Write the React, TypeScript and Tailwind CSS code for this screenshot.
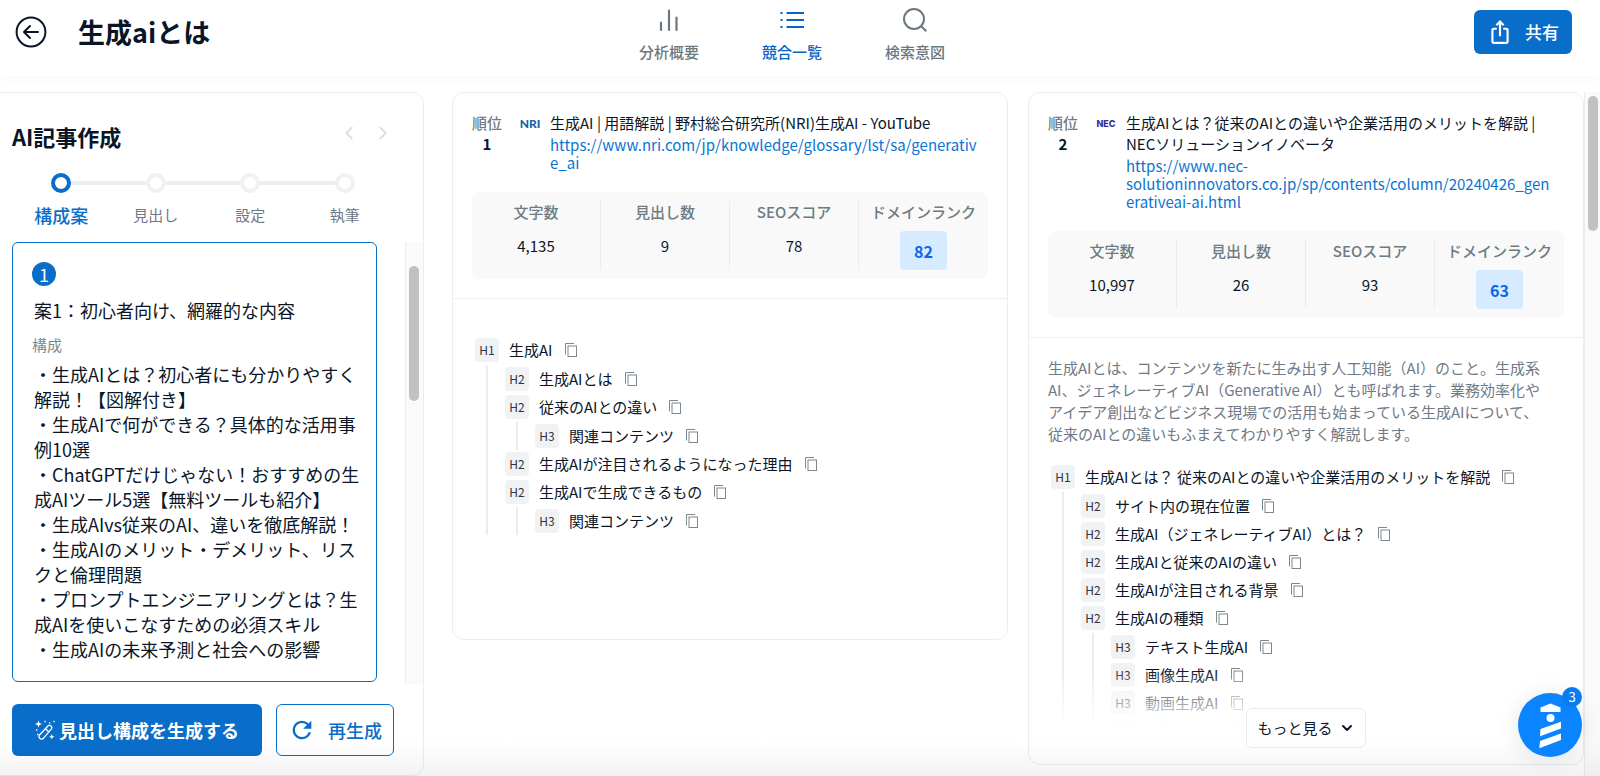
import { MdIosShare, MdRefresh } from "react-icons/md";
import { ChevronDown, ChevronLeft, ChevronRight } from "lucide-react";
import type { ReactNode } from "react";

type Heading = {
  level: string;
  text: string;
  children?: Heading[];
};

type Competitor = {
  rank: number;
  logo: ReactNode;
  title: string;
  url: string;
  stats: { label: string; value: string }[];
  domainRank: string;
  description?: string;
  headings: Heading[];
  collapsed?: boolean;
};

const steps = ["構成案", "見出し", "設定", "執筆"];

const outline = [
  "・生成AIとは？初心者にも分かりやすく解説！【図解付き】",
  "・生成AIで何ができる？具体的な活用事例10選",
  "・ChatGPTだけじゃない！おすすめの生成AIツール5選【無料ツールも紹介】",
  "・生成AIvs従来のAI、違いを徹底解説！",
  "・生成AIのメリット・デメリット、リスクと倫理問題",
  "・プロンプトエンジニアリングとは？生成AIを使いこなすための必須スキル",
  "・生成AIの未来予測と社会への影響",
];

const competitors: Competitor[] = [
  {
    rank: 1,
    logo: <span className="font-['Lato'] text-[12px] font-black text-[#1c5fa8]">NRI</span>,
    title: "生成AI | 用語解説 | 野村総合研究所(NRI)生成AI - YouTube",
    url: "https://www.nri.com/jp/knowledge/glossary/lst/sa/generative_ai",
    stats: [
      { label: "文字数", value: "4,135" },
      { label: "見出し数", value: "9" },
      { label: "SEOスコア", value: "78" },
    ],
    domainRank: "82",
    headings: [
      {
        level: "H1",
        text: "生成AI",
        children: [
          { level: "H2", text: "生成AIとは" },
          { level: "H2", text: "従来のAIとの違い", children: [{ level: "H3", text: "関連コンテンツ" }] },
          { level: "H2", text: "生成AIが注目されるようになった理由" },
          { level: "H2", text: "生成AIで生成できるもの", children: [{ level: "H3", text: "関連コンテンツ" }] },
        ],
      },
    ],
  },
  {
    rank: 2,
    logo: <span className="font-['Inter'] text-[9px] font-extrabold text-[#3a2f95]">NEC</span>,
    title: "生成AIとは？従来のAIとの違いや企業活用のメリットを解説 | NECソリューションイノベータ",
    url: "https://www.nec-solutioninnovators.co.jp/sp/contents/column/20240426_generativeai-ai.html",
    stats: [
      { label: "文字数", value: "10,997" },
      { label: "見出し数", value: "26" },
      { label: "SEOスコア", value: "93" },
    ],
    domainRank: "63",
    description:
      "生成AIとは、コンテンツを新たに生み出す人工知能（AI）のこと。生成系AI、ジェネレーティブAI（Generative AI）とも呼ばれます。業務効率化やアイデア創出などビジネス現場での活用も始まっている生成AIについて、従来のAIとの違いもふまえてわかりやすく解説します。",
    collapsed: true,
    headings: [
      {
        level: "H1",
        text: "生成AIとは？ 従来のAIとの違いや企業活用のメリットを解説",
        children: [
          { level: "H2", text: "サイト内の現在位置" },
          { level: "H2", text: "生成AI（ジェネレーティブAI）とは？" },
          { level: "H2", text: "生成AIと従来のAIの違い" },
          { level: "H2", text: "生成AIが注目される背景" },
          {
            level: "H2",
            text: "生成AIの種類",
            children: [
              { level: "H3", text: "テキスト生成AI" },
              { level: "H3", text: "画像生成AI" },
              { level: "H3", text: "動画生成AI" },
              { level: "H3", text: "音声生成AI" },
            ],
          },
        ],
      },
    ],
  },
];

const BackIcon = () => (
  <svg viewBox="0 0 32 32" className="h-8 w-8" fill="none" stroke="currentColor" strokeWidth="2">
    <circle cx="16" cy="16" r="14.4" />
    <path d="M23 16H9.5M15 10l-6 6 6 6" strokeLinecap="round" strokeLinejoin="round" />
  </svg>
);

const BarsIcon = () => (
  <svg viewBox="0 0 24 24" className="h-6 w-6" fill="none" stroke="currentColor" strokeWidth="2.2" strokeLinecap="round">
    <path d="M4 14.500v7.500M12 2.500v19.500M19.500 9.500v12.500" />
  </svg>
);

const ListIcon = () => (
  <svg viewBox="0 0 24 24" className="h-6 w-6" fill="none" stroke="currentColor" strokeWidth="2">
    <path d="M6.500 5H24M6.500 12H24M6.500 19H24M.5 5h2M.5 12h2M.5 19h2" />
  </svg>
);

const SearchIcon = () => (
  <svg viewBox="0 0 24 24" className="h-6 w-6" fill="none" stroke="currentColor" strokeWidth="2">
    <circle cx="11" cy="11" r="10" />
    <path d="M18 18l5.300 5.300" />
  </svg>
);

const CopyIcon = () => (
  <svg viewBox="0 0 12 14" className="h-[14px] w-3" fill="none" stroke="currentColor" strokeWidth="1">
    <path d="M.5 11.500V.5h8.500" />
    <rect x="3" y="3" width="8.500" height="10.500" />
  </svg>
);

const WandIcon = () => (
  <svg viewBox="0 0 20 20" className="h-5 w-5" fill="none" stroke="currentColor" strokeWidth="1.300">
    <path d="M4.300 15.200L12.700 6.200a2.300 2.300 0 0 1 3.500 3L8.300 18.400a2.600 2.600 0 0 1-4-3.200z" />
    <path d="M10.500 8.800l3.200 2.900" />
    <path
      d="M3.500 .5l1 2.500L7 4 4.500 5l-1 2.500L2.500 5 0 4l2.500-1zM16.800 14l.8 2 2 .8-2 .8-.8 2-.8-2-2-.8 2-.8z"
      fill="currentColor"
      stroke="none"
    />
    <path d="M9.300 1.500h1.400M14 2.800h1.400M18.300 1.500h1.400M1 10h1.400M2 14.500h1.400" />
  </svg>
);

const LighthouseIcon = () => (
  <svg viewBox="0 0 64 64" className="h-16 w-16" fill="#fff">
    <path d="M22.500 14.500L32.500 10.500l10 4V19h-20z" />
    <circle cx="32.500" cy="25" r="4" />
    <path d="M22.500 36L43 28.800v6.700L22 43.300zM22 48l21-7.500v6.500L21.300 55.200z" />
  </svg>
);

const navItems = [
  { label: "分析概要", icon: <BarsIcon /> },
  { label: "競合一覧", icon: <ListIcon />, active: true },
  { label: "検索意図", icon: <SearchIcon /> },
];

const Header = () => {
  return (
    <header className="grid h-[76px] shrink-0 grid-cols-[1fr_auto_1fr] items-start bg-white pt-2 pr-7 pl-3 shadow-[0_1px_16px_rgba(0,0,0,0.04)]">
      <div className="flex h-12 items-center gap-[31px]">
        <button aria-label="戻る" className="pl-[3px]">
          <BackIcon />
        </button>
        <h1 className="text-[27px] leading-8 font-bold">生成aiとは</h1>
      </div>
      <nav className="flex">
        {navItems.map((item) => (
          <a
            key={item.label}
            href="#"
            className={`flex w-[123px] flex-col items-center gap-2 text-[15px] leading-6 font-medium ${
              item.active ? "text-[#0763c9]" : "text-[#6c7880]"
            }`}
          >
            {item.icon}
            {item.label}
          </a>
        ))}
      </nav>
      <div className="flex h-12 items-center justify-end">
        <button className="flex h-11 items-center gap-3 rounded-md bg-[#096dca] px-[13px] text-[17px] font-medium text-white">
          <MdIosShare className="h-[26px] w-[26px]" />
          共有
        </button>
      </div>
    </header>
  );
};

const ArticlePanel = () => {
  return (
    <aside className="flex w-[424px] shrink-0 flex-col rounded-r-xl border border-l-0 border-[#eaeef0] bg-white">
      <div className="flex items-start justify-between pt-[27px] pr-[29px] pl-3">
        <h2 className="text-[22px] leading-8 font-bold">AI記事作成</h2>
        <div className="mt-0.5 flex gap-3 text-[#dcdfe2]">
          <button aria-label="前へ">
            <ChevronLeft className="h-[22px] w-[22px]" />
          </button>
          <button aria-label="次へ">
            <ChevronRight className="h-[22px] w-[22px]" />
          </button>
        </div>
      </div>

      <ol className="mt-[21px] grid grid-cols-4 pr-[31px] pl-[14px]">
        {steps.map((step, index) => (
          <li key={step} className="flex flex-col items-center gap-2.5">
            <div className="flex w-full items-center">
              <span className={`h-1 flex-1 ${index > 0 ? "bg-[#ebeef2]" : ""}`} />
              <span
                className={`h-5 w-5 rounded-full border-4 ${index === 0 ? "border-[#096dca]" : "border-[#f0f1f3]"}`}
              />
              <span className={`h-1 flex-1 ${index < steps.length - 1 ? "bg-[#ebeef2]" : ""}`} />
            </div>
            <span
              className={
                index === 0
                  ? "text-[18px] leading-6 font-medium text-[#096dca]"
                  : "text-[15px] leading-6 text-[#6f7987]"
              }
            >
              {step}
            </span>
          </li>
        ))}
      </ol>

      <div className="mt-[15px] flex min-h-0 flex-1 pl-3">
        <div className="min-w-0 flex-1 overflow-hidden pr-7">
          <article className="rounded-md border border-[#096dca] pt-[19px] pr-3 pb-[19px] pl-[19px] text-[18px] leading-[25px]">
            <span className="flex h-6 w-6 items-center justify-center rounded-full bg-[#096dca] text-white">1</span>
            <h3 className="mt-3 pl-0.5">案1：初心者向け、網羅的な内容</h3>
            <p className="mt-[11px] text-[15px] leading-[22px] text-[#7d878e]">構成</p>
            <div className="mt-1.5 pl-0.5">
              {outline.map((line) => (
                <p key={line}>{line}</p>
              ))}
            </div>
          </article>
        </div>
        <div className="w-[18px] border-l border-[#ececec] bg-[#fafafa] px-[3px] pt-6">
          <div className="h-[135px] w-[10px] rounded-full bg-[#c1c1c1]" />
        </div>
      </div>

      <div className="flex gap-[14px] pt-5 pb-[19px] pl-3 text-[18px] font-bold">
        <button className="flex h-[52px] w-[250px] items-center justify-center gap-1 rounded-md bg-[#096dca] text-white">
          <WandIcon />
          見出し構成を生成する
        </button>
        <button className="flex h-[52px] w-[118px] items-center justify-center gap-3 rounded-md border border-[#096dca] font-medium text-[#096dca]">
          <MdRefresh className="h-7 w-7" />
          再生成
        </button>
      </div>
    </aside>
  );
};

const HeadingTree = ({ headings, nested = false }: { headings: Heading[]; nested?: boolean }) => {
  return (
    <ul className={nested ? "mt-px ml-[11px] border-l-2 border-[#e9edf1] pl-[17px]" : ""}>
      {headings.map((heading, index) => (
        <li key={index}>
          <div className="flex h-7 items-center">
            <span className="flex h-6 w-6 items-center justify-center rounded bg-[#f1f2f4] text-[12px] text-[#2c3540]">
              {heading.level}
            </span>
            <span className="ml-2.5 text-[15px]">{heading.text}</span>
            <button aria-label="コピー" className="ml-3 text-[#7d878e]">
              <CopyIcon />
            </button>
          </div>
          {heading.children && <HeadingTree headings={heading.children} nested />}
        </li>
      ))}
    </ul>
  );
};

const CompetitorCard = ({ item }: { item: Competitor }) => {
  return (
    <article
      className={`flex min-h-[548px] min-w-0 flex-col rounded-xl border border-[#eaeef0] bg-white ${
        item.collapsed ? "self-stretch" : ""
      }`}
    >
      <div className="border-b border-[#eef1f3] px-[19px] pt-[19px] pb-[19px]">
        <div className="flex">
          <div className="w-[30px] shrink-0 text-center text-[15px] leading-[21px]">
            <p className="font-medium text-[#6f7b83]">順位</p>
            <p className="font-bold">{item.rank}</p>
          </div>
          <div className="ml-[18px] flex h-6 w-5 shrink-0 items-center justify-center">{item.logo}</div>
          <div className="ml-2.5 min-w-0 flex-1">
            <h3 className="text-[15px] leading-[21px]">{item.title}</h3>
            <a href="#" className="mt-[3px] block pr-[9px] text-[15px] leading-[18px] break-words text-[#0b74d1]">
              {item.url}
            </a>
          </div>
        </div>

        <dl className="mt-5 grid grid-cols-4 rounded-lg bg-[#f9f9f9] py-[9px] text-center text-[15px]">
          {item.stats.map((stat) => (
            <div key={stat.label} className="border-r border-[#e9edf1]">
              <dt className="leading-[22px] font-medium text-[#6f7b83]">{stat.label}</dt>
              <dd className="mt-3 leading-[22px]">{stat.value}</dd>
            </div>
          ))}
          <div>
            <dt className="leading-[22px] font-medium whitespace-nowrap text-[#6f7b83]">ドメインランク</dt>
            <dd className="mx-auto mt-2 flex h-[39px] w-[47px] items-center justify-center rounded bg-[#d6ebff] text-[16px] font-bold text-[#0a66f0]">
              {item.domainRank}
            </dd>
          </div>
        </dl>
      </div>

      <div className={`flex flex-col px-[19px] ${item.collapsed ? "relative min-h-0 flex-1 overflow-hidden" : ""}`}>
        <p className="mt-[19px] mb-[18px] pr-4 text-[15px] leading-[22px] text-[#6f7987]">{item.description}</p>
        <div className="pl-[3px]">
          <HeadingTree headings={item.headings} />
        </div>
        {item.collapsed && (
          <div className="absolute inset-x-0 bottom-0 h-14 bg-gradient-to-b from-transparent to-white" />
        )}
      </div>
      {item.collapsed && (
        <button className="relative -mt-[18px] mb-4 flex h-10 items-center gap-1.5 self-center rounded-md border border-[#eaeef0] bg-white px-[10px] text-[15px]">
          もっと見る
          <ChevronDown className="h-4 w-4" strokeWidth={3} />
        </button>
      )}
    </article>
  );
};

const ChatLauncher = () => {
  return (
    <button
      aria-label="チャットを開く"
      className="absolute right-[18px] bottom-[19px] flex h-16 w-16 items-center justify-center rounded-full bg-[#0a84ff] shadow-[0_2px_24px_rgba(0,0,0,0.1)]"
    >
      <LighthouseIcon />
      <span className="absolute -top-1.5 right-0 flex h-5 w-5 items-center justify-center rounded-full bg-[#0a7cf0] text-[13px] text-white">
        3
      </span>
    </button>
  );
};

const App = () => {
  return (
    <div className="relative flex h-screen flex-col overflow-hidden bg-white font-['Noto_Sans_CJK_JP',sans-serif] text-[#0a1628]">
      <Header />
      <div className="flex min-h-0 flex-1 pt-4">
        <ArticlePanel />
        <main className="grid min-w-0 flex-1 grid-cols-2 items-start gap-5 pb-[11px] pl-7">
          {competitors.map((item) => (
            <CompetitorCard key={item.rank} item={item} />
          ))}
        </main>
        <div className="w-4 shrink-0 border-l border-[#ececec] bg-[#fafafa] px-[3px] pt-1">
          <div className="h-[135px] w-[10px] rounded-full bg-[#c1c1c1]" />
        </div>
      </div>
      <div className="pointer-events-none absolute inset-x-0 bottom-0 h-9 bg-gradient-to-b from-transparent to-black/5" />
      <ChatLauncher />
    </div>
  );
};

export default App;
